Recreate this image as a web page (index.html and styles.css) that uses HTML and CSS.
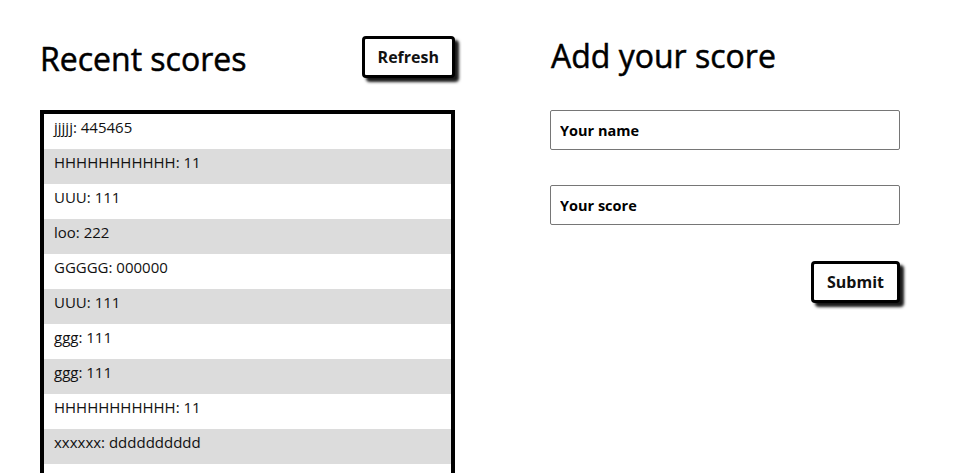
FILE: index.html
```html
<!DOCTYPE html>
<html lang="en">
<head>
<meta charset="utf-8">
<title>Scores</title>
<link rel="stylesheet" href="styles.css">
</head>
<body>
<main class="page">
  <section class="scores">
    <div class="scores-head">
      <h1 class="title">Recent scores</h1>
      <button class="btn" type="button">Refresh</button>
    </div>
    <ul class="score-list">
      <li class="row">jjjjj: 445465</li>
      <li class="row">HHHHHHHHHHH: 11</li>
      <li class="row">UUU: 111</li>
      <li class="row">loo: 222</li>
      <li class="row">GGGGG: 000000</li>
      <li class="row">UUU: 111</li>
      <li class="row">ggg: 111</li>
      <li class="row">ggg: 111</li>
      <li class="row">HHHHHHHHHHH: 11</li>
      <li class="row">xxxxxx: dddddddddd</li>
      <li class="row">xxxxx: 7000</li>
    </ul>
  </section>
  <section class="add">
    <h1 class="title">Add your score</h1>
    <form class="form">
      <input class="field" type="text" placeholder="Your name">
      <input class="field" type="text" placeholder="Your score">
      <div class="actions">
        <button class="btn" type="button">Submit</button>
      </div>
    </form>
  </section>
</main>
</body>
</html>
```
FILE: styles.css
```css
* { box-sizing: border-box; }
html, body { margin: 0; padding: 0; background: #fff; }
body {
  font-family: "Open Sans", "Noto Sans", sans-serif;
  color: #000;
  overflow: hidden;
  height: 473px;
}
.page {
  display: flex;
  gap: 95px;
  padding: 36px 0 0 40px;
}
.scores { width: 415px; }
.scores-head {
  display: flex;
  align-items: center;
  justify-content: space-between;
  height: 42px;
  margin-bottom: 32px;
}
.title {
  margin: 0;
  font-size: 32px;
  font-weight: 400;
  line-height: 42px;
  -webkit-text-stroke: 0.5px #000;
}
.scores-head .title { margin-top: 4px; }
.btn {
  font-family: inherit;
  font-size: 16px;
  font-weight: 700;
  color: #111;
  background: #fff;
  border: 3px solid #000;
  border-radius: 4px;
  padding: 6px 13px;
  line-height: 24px;
  box-shadow: 4px 4px 3px rgba(0,0,0,0.9);
  cursor: pointer;
}
.score-list {
  list-style: none;
  margin: 0;
  padding: 0;
  border: 4px solid #000;
  border-bottom: none;
}
.row {
  height: 35px;
  padding: 3px 10px 0;
  font-size: 15px;
  line-height: 20px;
  color: #111;
}
.row:nth-child(even) { background: #dcdcdc; }
.add { width: 350px; }
.add .title { margin-left: 1px; margin-top: -1px; }
.form {
  display: flex;
  flex-direction: column;
  gap: 35px;
  margin-top: 33px;
}
.field {
  width: 350px;
  height: 40px;
  border: 1px solid #767676;
  border-radius: 2px;
  padding: 0 9px;
  font-family: inherit;
  font-size: 14.5px;
  font-weight: 700;
  color: #000;
}
.field::placeholder { color: #000; opacity: 1; }
.actions {
  display: flex;
  justify-content: flex-end;
  margin-top: 1px;
}
```
